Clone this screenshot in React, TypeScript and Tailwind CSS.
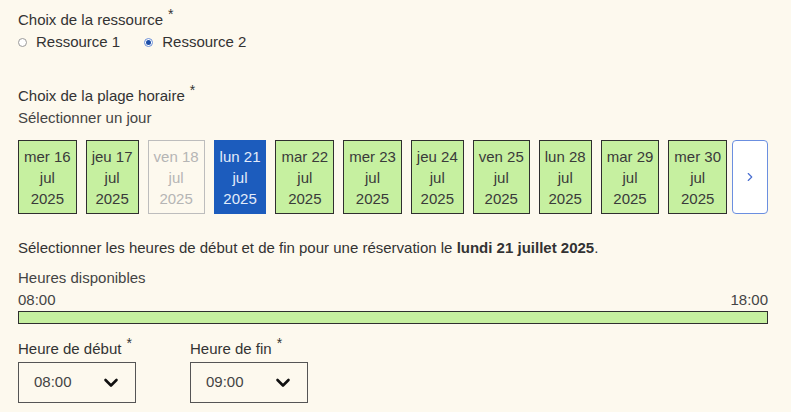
import { ChevronRight } from 'lucide-react';

type Day = { label: string; state: 'free' | 'off' | 'selected' };

const days: Day[] = [
  { label: 'mer 16', state: 'free' },
  { label: 'jeu 17', state: 'free' },
  { label: 'ven 18', state: 'off' },
  { label: 'lun 21', state: 'selected' },
  { label: 'mar 22', state: 'free' },
  { label: 'mer 23', state: 'free' },
  { label: 'jeu 24', state: 'free' },
  { label: 'ven 25', state: 'free' },
  { label: 'lun 28', state: 'free' },
  { label: 'mar 29', state: 'free' },
  { label: 'mer 30', state: 'free' },
];

const dayStyles: Record<Day['state'], string> = {
  free: 'bg-[#c6f0a0] border-[#2f2f2f] text-[#3a3a3a]',
  off: 'bg-transparent border-[#bdbdbd] text-[#b5b5b5]',
  selected: 'bg-[#1c5cbd] border-[#1c5cbd] text-[#e3ecfa]',
};

const Required = () => (
  <span className="relative -top-[6px] ml-[5px] text-[14px]">*</span>
);

const Radio = ({ label, checked }: { label: string; checked?: boolean }) => (
  <label className="flex items-center gap-[9px]">
    <span
      className={
        checked
          ? 'flex h-[9px] w-[9px] items-center justify-center rounded-full border border-[#6b8fd6] bg-white'
          : 'h-[9px] w-[9px] rounded-full border border-[#9a9a9a] bg-white'
      }
    >
      {checked && <span className="h-[5px] w-[5px] rounded-full bg-[#1c4ea8]" />}
    </span>
    <span>{label}</span>
  </label>
);

const Chevron = () => (
  <svg width="16" height="16" viewBox="0 0 16 16" className="text-[#111]">
    <path
      d="M2.5 5 L8 10.5 L13.5 5"
      fill="none"
      stroke="currentColor"
      strokeWidth="2.6"
      strokeLinecap="round"
      strokeLinejoin="round"
    />
  </svg>
);

const TimeSelect = ({ label, value }: { label: string; value: string }) => (
  <div className="flex flex-col">
    <div className="h-[26px] leading-[26px]">
      {label}
      <Required />
    </div>
    <div className="flex h-[41px] w-[118px] items-center justify-between border border-[#555] pl-[15px] pr-[16px] text-[#444]">
      <span>{value}</span>
      <Chevron />
    </div>
  </div>
);

export default function App() {
  return (
    <div
      className="h-[412px] w-[791px] overflow-hidden bg-[#fdf9ee] pl-[18px] pr-[23px] pt-[8px] text-[15px] text-[#333]"
      style={{ fontFamily: '"Liberation Sans", Arial, sans-serif' }}
    >
      <fieldset>
        <div className="h-[22px] leading-[24px]">
          Choix de la ressource
          <Required />
        </div>
        <div className="flex h-[24px] items-center gap-[24px]">
          <Radio label="Ressource 1" />
          <Radio label="Ressource 2" checked />
        </div>
      </fieldset>

      <div className="mt-[30px] h-[23px] leading-[24px]">
        Choix de la plage horaire
        <Required />
      </div>
      <div className="h-[22px] leading-[22px] text-[#444]">Sélectionner un jour</div>

      <div className="mt-[11px] flex h-[74px] items-stretch">
        <div className="flex gap-[9px]">
          {days.map((d) => (
            <button
              key={d.label}
              className={`flex flex-col items-center justify-center border px-[5px] text-[15px] leading-[21px] ${dayStyles[d.state]}`}
            >
              <span>{d.label}</span>
              <span>jul</span>
              <span>2025</span>
            </button>
          ))}
        </div>
        <button className="ml-[5px] flex w-[36px] items-center justify-center rounded-[4px] border border-[#6b8fe0] bg-white text-[#4a6fd0]">
          <ChevronRight size={14} strokeWidth={2} />
        </button>
      </div>

      <p className="mt-[23px] h-[22px] leading-[22px]">
        Sélectionner les heures de début et de fin pour une réservation le{' '}
        <strong className="font-bold">lundi 21 juillet 2025</strong>.
      </p>

      <div className="mt-[8px] h-[22px] leading-[22px] text-[#444]">Heures disponibles</div>
      <div className="flex h-[22px] justify-between leading-[22px] text-[#444]">
        <span>08:00</span>
        <span>18:00</span>
      </div>
      <div className="h-[13px] w-full border border-[#2f2f2f] bg-[#c6f0a0]" />

      <div className="mt-[12px] flex gap-[54px]">
        <TimeSelect label="Heure de début" value="08:00" />
        <TimeSelect label="Heure de fin" value="09:00" />
      </div>
    </div>
  );
}
